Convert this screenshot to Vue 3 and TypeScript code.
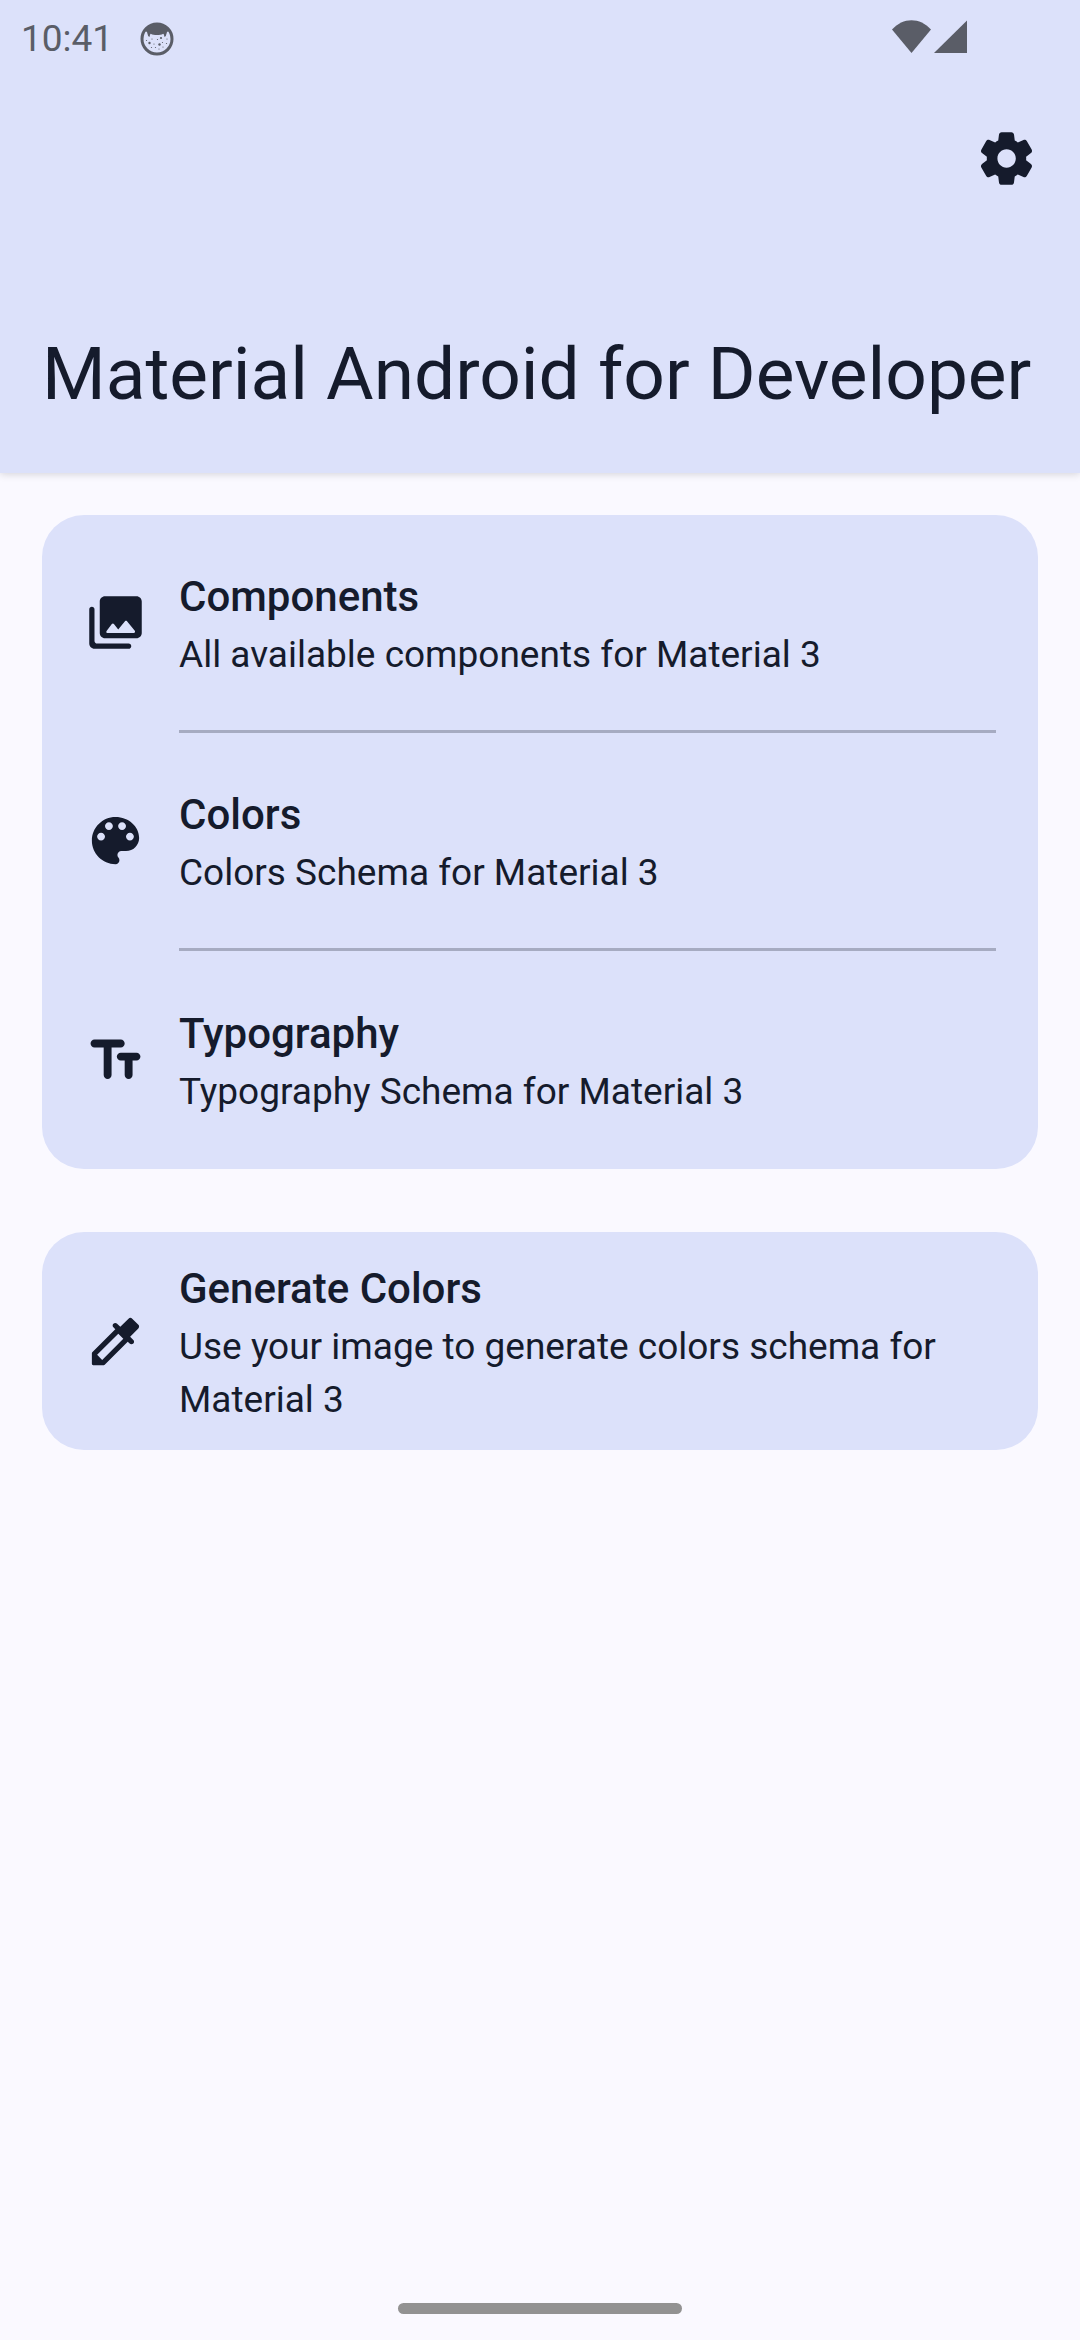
<script setup lang="ts">
interface Entry {
  title: string
  summary: string
  icon: string
}

const groups: Entry[][] = [
  [
    {
      title: 'Components',
      summary: 'All available components for Material 3',
      icon: 'M22 16V4c0-1.100-.9-2-2-2H8c-1.100 0-2 .9-2 2v12c0 1.100.9 2 2 2h12c1.100 0 2-.9 2-2zm-10.600-3.470 1.630 2.180 2.580-3.220c.2-.25.58-.25.78 0l2.960 3.700c.26.33.03.81-.39.81H9c-.41 0-.65-.47-.4-.8l2-2.670c.2-.26.6-.26.8 0zM2 7v13c0 1.100.9 2 2 2h13c.55 0 1-.45 1-1s-.45-1-1-1H5c-.55 0-1-.45-1-1V7c0-.55-.45-1-1-1s-1 .45-1 1z',
    },
    {
      title: 'Colors',
      summary: 'Colors Schema for Material 3',
      icon: 'M12 3c-4.970 0-9 4.030-9 9s4.030 9 9 9c.83 0 1.500-.67 1.500-1.500 0-.39-.15-.74-.39-1.010-.23-.26-.38-.61-.38-.99 0-.83.67-1.500 1.500-1.500H16c2.760 0 5-2.240 5-5 0-4.420-4.030-8-9-8zm-5.500 9c-.83 0-1.500-.67-1.500-1.500S5.670 9 6.500 9 8 9.670 8 10.500 7.330 12 6.500 12zm3-4C8.670 8 8 7.330 8 6.500S8.670 5 9.500 5s1.500.67 1.500 1.500S10.330 8 9.500 8zm5 0c-.83 0-1.500-.67-1.500-1.500S13.670 5 14.500 5s1.500.67 1.500 1.500S15.330 8 14.500 8zm3 4c-.83 0-1.500-.67-1.500-1.500S16.670 9 17.500 9s1.500.67 1.500 1.500-.67 1.500-1.500 1.500z',
    },
    {
      title: 'Typography',
      summary: 'Typography Schema for Material 3',
      icon: 'M2.500 5.500C2.500 6.330 3.170 7 4 7h3.500v10.500c0 .83.67 1.500 1.500 1.500s1.500-.67 1.500-1.500V7H14c.83 0 1.500-.67 1.500-1.500S14.830 4 14 4H4c-.83 0-1.500.67-1.500 1.500zM20 9h-6c-.83 0-1.500.67-1.500 1.500S13.170 12 14 12h1.500v5.500c0 .83.67 1.500 1.500 1.500s1.500-.67 1.500-1.500V12H20c.83 0 1.500-.67 1.500-1.500S20.830 9 20 9z',
    },
  ],
  [
    {
      title: 'Generate Colors',
      summary: 'Use your image to generate colors schema for Material 3',
      icon: 'M20.710 5.630l-2.340-2.340c-.39-.39-1.020-.39-1.410 0l-3.120 3.120-1.230-1.210c-.39-.39-1.020-.38-1.410 0-.39.39-.39 1.020 0 1.410l.72.72-8.770 8.770c-.1.1-.15.22-.15.36v4.040c0 .28.22.5.5.5h4.040c.13 0 .26-.05.35-.15l8.770-8.770.72.72c.39.39 1.020.39 1.410 0 .39-.39.39-1.020 0-1.410l-1.220-1.220 3.120-3.120c.41-.4.41-1.030.02-1.420zM6.920 19L5 17.080l8.060-8.060 1.920 1.920L6.920 19z',
    },
  ],
]
</script>

<template>
  <div class="screen">
    <header class="app-bar">
      <div class="status">
        <time class="clock">10:41</time>
        <svg class="face" viewBox="0 0 34 34" aria-hidden="true">
          <circle cx="17" cy="17" r="15" fill="none" stroke="currentColor" stroke-width="3" />
          <path
            fill="currentColor"
            d="M5 9C8 4 12 2 17 2s9 2 12 7l-2 1c-.3 1.500-.8 2.500-1.200 4.300l-1.700.4c.2-1.200-.1-2.200-.9-2.900-2 1-3.700 1.300-6.200 1.300s-4.500-.3-6.200-1.300c-.8.7-1.100 1.700-.9 2.900l-1.700-.4C7.800 12.500 7.300 11.500 7 10z"
          />
          <g fill="currentColor">
            <circle cx="9.500" cy="21" r="1.200" />
            <circle cx="21" cy="16" r="1.100" />
            <circle cx="19.500" cy="22.500" r="1.200" />
            <circle cx="17.500" cy="17.500" r=".6" />
            <circle cx="14" cy="22" r=".6" />
            <circle cx="22.500" cy="20.500" r=".6" />
            <circle cx="27" cy="17" r=".6" />
            <circle cx="26.500" cy="21.500" r=".6" />
            <circle cx="12" cy="17" r=".6" />
            <circle cx="6.500" cy="18.500" r=".6" />
            <circle cx="11.500" cy="25.500" r=".6" />
            <circle cx="15.500" cy="25.500" r=".6" />
            <circle cx="19" cy="27" r=".6" />
            <circle cx="23" cy="25" r=".6" />
          </g>
        </svg>
        <svg class="signals" viewBox="0 0 76 33" aria-hidden="true">
          <path fill="currentColor" d="M0 9.500C11-3 28-3 39 9.500L19.500 33z" />
          <path fill="currentColor" d="M75 .5V33H42z" />
        </svg>
      </div>
      <div class="actions">
        <button class="icon-button" type="button" aria-label="Settings">
          <svg class="icon" viewBox="0 0 24 24" aria-hidden="true">
            <path
              fill="currentColor"
              d="M19.500 12c0-.23-.01-.45-.03-.68l1.860-1.410c.4-.3.51-.86.26-1.300l-1.870-3.230c-.25-.44-.79-.62-1.250-.42l-2.150.91c-.37-.26-.76-.49-1.170-.68l-.29-2.310c-.06-.5-.49-.88-.99-.88h-3.730c-.51 0-.94.38-1 .88l-.29 2.310c-.41.19-.8.42-1.170.68l-2.150-.91c-.46-.2-1-.02-1.250.42L2.410 8.620c-.25.44-.14.99.26 1.300l1.860 1.410c-.02.22-.03.44-.03.67s.01.45.03.68l-1.860 1.410c-.4.3-.51.86-.26 1.300l1.870 3.230c.25.44.79.62 1.250.42l2.150-.91c.37.26.76.49 1.170.68l.29 2.310c.06.5.49.88.99.88h3.730c.5 0 .93-.38.99-.88l.29-2.310c.41-.19.8-.42 1.170-.68l2.150.91c.46.2 1 .02 1.250-.42l1.870-3.230c.25-.44.14-.99-.26-1.300l-1.860-1.410c.03-.23.04-.45.04-.68zm-7.460 3.500c-1.930 0-3.500-1.570-3.500-3.500s1.570-3.500 3.500-3.500 3.500 1.570 3.500 3.500-1.570 3.500-3.500 3.500z"
            />
          </svg>
        </button>
      </div>
      <h1 class="headline">Material Android for Developer</h1>
    </header>

    <main class="content">
      <section v-for="(group, index) in groups" :key="index" class="card">
        <button v-for="entry in group" :key="entry.title" class="row" type="button">
          <svg class="icon" viewBox="0 0 24 24" aria-hidden="true">
            <path :d="entry.icon" fill="currentColor" />
          </svg>
          <span class="text">
            <span class="title">{{ entry.title }}</span>
            <span class="summary">{{ entry.summary }}</span>
          </span>
        </button>
      </section>
    </main>

    <footer class="gesture-bar"><span class="handle"></span></footer>
  </div>
</template>

<style>
body {
  margin: 0;
  background: #faf9ff;
}
</style>

<style scoped>
.screen {
  display: flex;
  flex-direction: column;
  min-height: 100vh;
  background: #faf9ff;
  color: #151b2c;
  font-family: Roboto, "Noto Sans", sans-serif;
}

.app-bar {
  padding-bottom: 52px;
  background: #dce1fa;
  box-shadow: 0 1px 8px rgba(0, 0, 0, 0.16);
}

.status {
  display: flex;
  align-items: center;
  box-sizing: border-box;
  height: 77px;
  padding: 0 112px 0 21px;
  color: #5a5d67;
}

.clock {
  font-size: 37px;
  line-height: 44px;
}

.face {
  width: 34px;
  height: 34px;
  margin-left: 27px;
}

.signals {
  width: 76px;
  height: 33px;
  margin-left: auto;
  padding-bottom: 4px;
}

.actions {
  display: flex;
  justify-content: flex-end;
  align-items: center;
  height: 163px;
  padding: 0 42px;
}

.icon-button,
.row {
  margin: 0;
  padding: 0;
  border: 0;
  background: none;
  color: inherit;
  font: inherit;
  text-align: left;
  cursor: pointer;
}

.icon-button {
  display: flex;
}

.icon {
  flex: none;
  width: 63px;
  height: 63px;
}

.headline {
  margin: 87px 42px 0;
  font-size: 73px;
  font-weight: 400;
  line-height: 94px;
  white-space: nowrap;
}

.content {
  display: flex;
  flex: 1;
  flex-direction: column;
  gap: 63px;
  padding: 42px;
}

.card {
  display: flex;
  flex-direction: column;
  border-radius: 42px;
  background: #dce1fa;
}

.row {
  display: flex;
  align-items: stretch;
  gap: 32px;
  padding: 0 42px;
}

.row .icon {
  align-self: center;
}

.text {
  display: flex;
  flex: 1;
  flex-direction: column;
  justify-content: center;
  box-sizing: border-box;
  min-height: 218px;
}

/* The divider takes the row's last 3px, so the icon centres above it. */
.row:not(:last-child) .icon {
  margin-bottom: 3px;
}

.row:not(:last-child) .text {
  border-bottom: 3px solid #a6abc1;
}

.title {
  font-size: 42px;
  font-weight: 500;
  line-height: 63px;
}

.summary {
  font-size: 37px;
  line-height: 53px;
}

.gesture-bar {
  display: flex;
  justify-content: center;
  padding-bottom: 26px;
}

.handle {
  width: 284px;
  height: 11px;
  border-radius: 6px;
  background: #929292;
}
</style>
